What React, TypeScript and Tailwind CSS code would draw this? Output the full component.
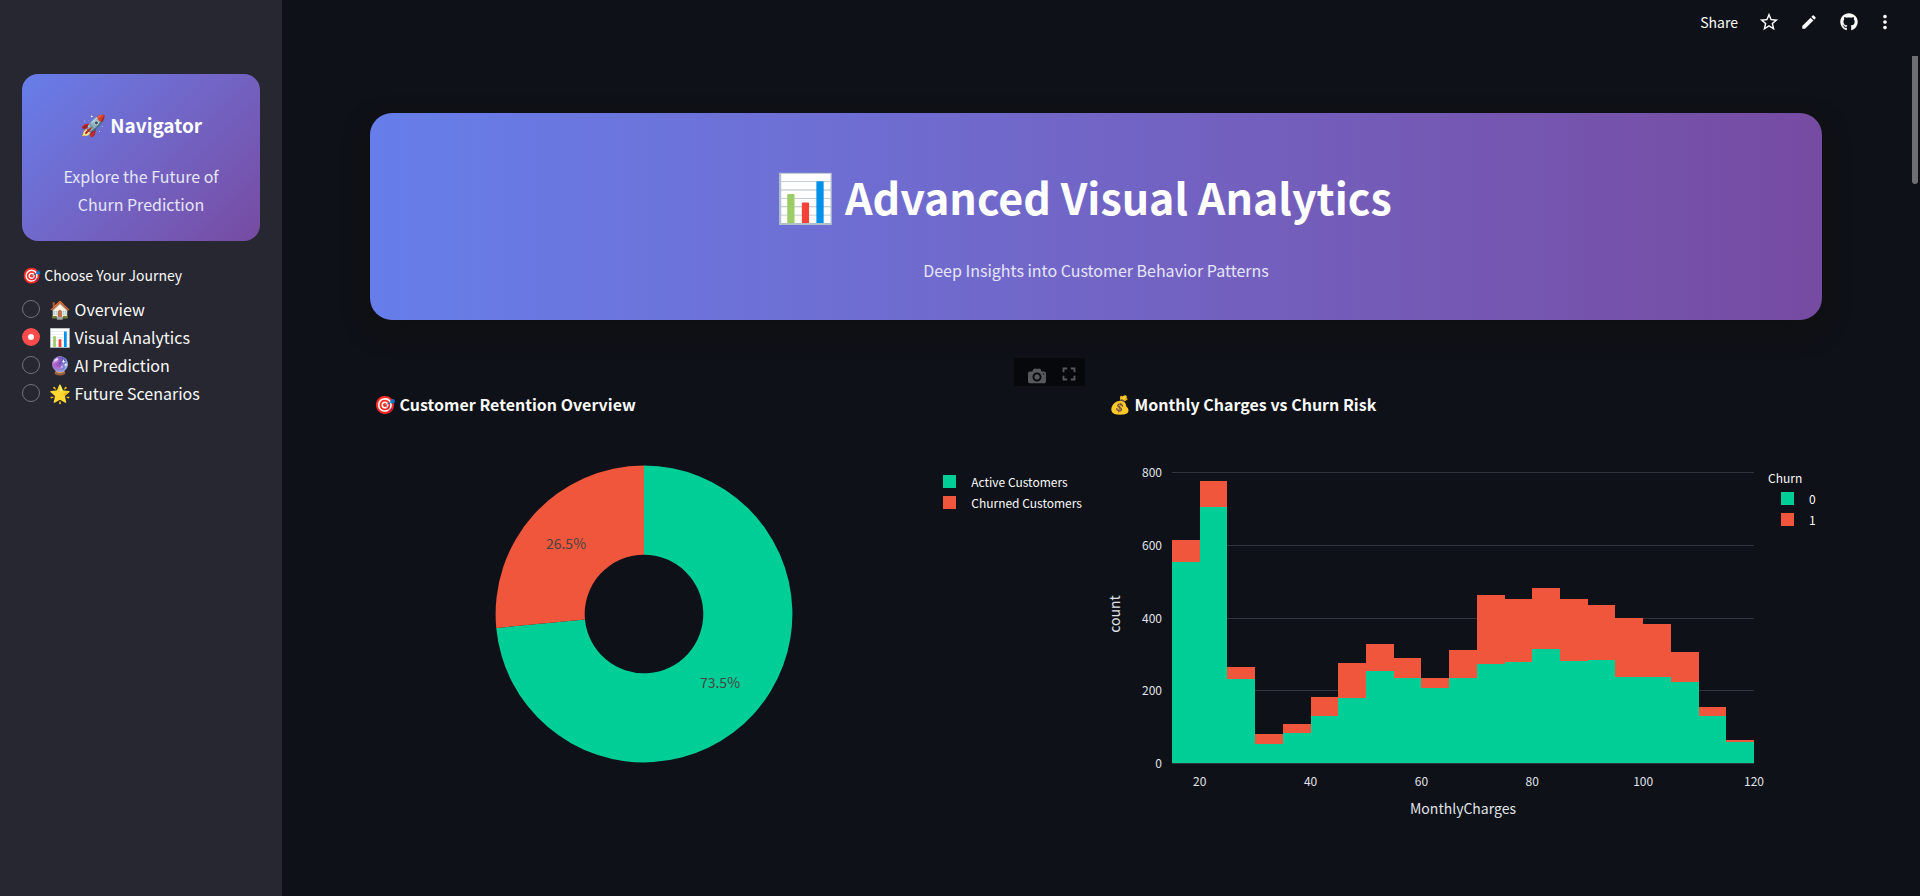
import type { ReactNode } from "react";
import { MdEdit, MdFullscreen, MdMoreVert, MdStarBorder } from "react-icons/md";
import { FaGithub } from "react-icons/fa";

const STAYED = "#00ce97";
const CHURNED = "#f0563b";

const pages = [
  { icon: "🏠", label: "Overview" },
  { icon: "📊", label: "Visual Analytics" },
  { icon: "🔮", label: "AI Prediction" },
  { icon: "🌟", label: "Future Scenarios" },
];

// [total customers, customers who stayed] for each 5-wide bin from 15 to 120
const bins: [number, number][] = [
  [613, 554], [775, 703], [264, 231], [80, 52], [107, 82], [181, 129], [275, 179],
  [327, 253], [289, 234], [234, 206], [311, 234], [462, 272], [451, 278], [481, 313],
  [451, 280], [434, 283], [398, 236], [382, 236], [305, 223], [154, 129], [63, 58],
];

function Emoji({ children }: { children: ReactNode }) {
  return <span className="font-['Noto_Color_Emoji',sans-serif] text-[1.1em] leading-none">{children}</span>;
}

function Sidebar() {
  return (
    <aside className="w-[282px] shrink-0 bg-[#262730] px-[22px] pt-[74px]">
      <div className="rounded-[16px] bg-linear-135 from-[#667eea] to-[#764ba2] px-4 pt-[35px] pb-[23px] text-center">
        <h2 className="text-[19px] leading-8 font-bold text-white">
          <Emoji>🚀</Emoji> Navigator
        </h2>
        <p className="mt-[21px] px-4 text-[16px] leading-7 text-[#e6e6fa]">Explore the Future of Churn Prediction</p>
      </div>
      <fieldset className="mt-[22px]">
        <legend className="text-[14px] leading-6">
          <Emoji>🎯</Emoji> Choose Your Journey
        </legend>
        <div className="mt-2">
          {pages.map((p) => (
            <label key={p.label} className="flex h-7 items-center gap-[9px] text-[16px] leading-6">
              <input
                type="radio"
                name="page"
                defaultChecked={p.label === "Visual Analytics"}
                className="size-[18px] appearance-none rounded-full border border-[#70717a] checked:border-[6px] checked:border-[#ff4b4b] checked:bg-[#fafafa]"
              />
              <span className="whitespace-nowrap">
                <Emoji>{p.icon}</Emoji> {p.label}
              </span>
            </label>
          ))}
        </div>
      </fieldset>
    </aside>
  );
}

function Toolbar() {
  return (
    <header className="flex h-14 items-center justify-end pr-6 pb-[12px]">
      <button type="button" className="text-[14px] leading-6">Share</button>
      <button type="button" aria-label="Favorite" className="ml-5"><MdStarBorder size={22} /></button>
      <button type="button" aria-label="Edit" className="ml-5"><MdEdit size={18} /></button>
      <button type="button" aria-label="View source" className="ml-[22px]"><FaGithub size={18} /></button>
      <button type="button" aria-label="More options" className="ml-4"><MdMoreVert size={22} /></button>
    </header>
  );
}

function Donut() {
  const share = 0.265;
  const angle = -share * 2 * Math.PI;
  const at = (r: number, a: number) => `${149 + r * Math.sin(a)} ${149 - r * Math.cos(a)}`;
  return (
    <svg viewBox="0 0 298 298" className="mt-[49px] ml-[125px] w-[298px] min-w-0" role="img" aria-label="Customer retention">
      <path d={`M${at(148.4, 0)}A148.4 148.4 0 1 1 ${at(148.4, angle)}L${at(59.3, angle)}A59.3 59.3 0 1 0 ${at(59.3, 0)}Z`} fill={STAYED} />
      <path d={`M${at(148.4, 0)}A148.4 148.4 0 0 0 ${at(148.4, angle)}L${at(59.3, angle)}A59.3 59.3 0 0 1 ${at(59.3, 0)}Z`} fill={CHURNED} />
      <g className="fill-[#444444] text-[14px]" textAnchor="middle">
        <text x="71" y="84">26.5%</text>
        <text x="225" y="223">73.5%</text>
      </g>
    </svg>
  );
}

function Histogram() {
  const left = 67;
  const base = 346;
  const step = 582 / bins.length;
  const y = (count: number) => Math.round(base - count * 0.3637);
  const x = (i: number) => Math.round(left + i * step);
  return (
    <svg viewBox="0 0 661 410" className="min-w-0 flex-1" role="img" aria-label="Monthly charges by churn">
      <g shapeRendering="crispEdges">
        {[0, 200, 400, 600, 800].map((v) => (
          <rect key={v} x={left} y={y(v)} width="582" height="1" fill="#31333f" />
        ))}
        {bins.map(([total, stayed], i) => (
          <g key={i}>
            <rect x={x(i)} y={y(total)} width={x(i + 1) - x(i)} height={y(stayed) - y(total)} fill={CHURNED} />
            <rect x={x(i)} y={y(stayed)} width={x(i + 1) - x(i)} height={base - y(stayed)} fill={STAYED} />
          </g>
        ))}
      </g>
      <g className="fill-[#e0e3ea] text-[12px]">
        {[0, 200, 400, 600, 800].map((v) => (
          <text key={v} x="57" y={y(v) + 5} textAnchor="end">{v}</text>
        ))}
        {[20, 40, 60, 80, 100, 120].map((v) => (
          <text key={v} x={left + ((v - 15) / 5) * step} y="369" textAnchor="middle">{v}</text>
        ))}
      </g>
      <g className="fill-[#e0e3ea] text-[14px]" textAnchor="middle">
        <text x="358" y="397">MonthlyCharges</text>
        <text transform="translate(15 197) rotate(-90)">count</text>
      </g>
    </svg>
  );
}

function LegendItem({ color, children }: { color: string; children: ReactNode }) {
  return (
    <li className="flex h-[21px] items-center gap-[15px]">
      <span className="size-[13px]" style={{ backgroundColor: color }} />
      {children}
    </li>
  );
}

function ChartTitle({ icon, children }: { icon: string; children: ReactNode }) {
  return (
    <h2 className="mt-[6px] pl-[4px] text-[16px] leading-6 font-bold">
      <Emoji>{icon}</Emoji> {children}
    </h2>
  );
}

export default function App() {
  return (
    <div className="relative flex min-h-screen bg-[#0e1117] font-['Noto_Sans_CJK_SC','Noto_Sans_CJK_JP',sans-serif] text-[#fafafa]">
      <Sidebar />
      <div className="min-w-0 flex-1">
        <Toolbar />
        <main className="pt-[57px] pr-[98px] pb-12 pl-[88px]">
          <div className="rounded-[22px] bg-linear-90 from-[#667eea] to-[#764ba2] pt-[47px] pb-[36px] text-center shadow-[0_10px_24px_rgba(16,16,16,0.9)]">
            <h1 className="pr-6 text-[43px] leading-[72px] font-bold text-white">
              <Emoji>📊</Emoji> Advanced Visual Analytics
            </h1>
            <p className="mt-6 text-[16px] leading-7 text-[#e6e6fa]">Deep Insights into Customer Behavior Patterns</p>
          </div>
          <div className="mt-[38px] grid grid-cols-2 gap-[18px]">
            <section>
              <div className="mr-[2px] ml-auto flex h-7 w-[71px] items-end justify-between bg-[#07080b] pr-[5px] pb-px pl-[14px] text-[#57585a]">
                <button type="button" aria-label="Download plot as a png">
                  <svg viewBox="0 0 1000 1000" className="size-[18px]" fill="currentColor">
                    <path transform="matrix(1 0 0 -1 0 850)" d="m500 450c-83 0-150-67-150-150 0-83 67-150 150-150 83 0 150 67 150 150 0 83-67 150-150 150z m400 150h-120c-16 0-34 13-39 29l-31 93c-6 15-23 28-40 28h-340c-16 0-34-13-39-28l-31-94c-6-15-23-28-40-28h-120c-55 0-100-45-100-100v-450c0-55 45-100 100-100h800c55 0 100 45 100 100v450c0 55-45 100-100 100z m-400-550c-138 0-250 112-250 250 0 138 112 250 250 250 138 0 250-112 250-250 0-138-112-250-250-250z m365 380c-19 0-35 16-35 35 0 19 16 35 35 35 19 0 35-16 35-35 0-19-16-35-35-35z" />
                  </svg>
                </button>
                <button type="button" aria-label="Fullscreen"><MdFullscreen size={22} /></button>
              </div>
              <ChartTitle icon="🎯">Customer Retention Overview</ChartTitle>
              <div className="flex items-start justify-between">
                <Donut />
                <ul className="mt-[55px] mr-[5px] shrink-0 text-[12px]">
                  <LegendItem color={STAYED}>Active Customers</LegendItem>
                  <LegendItem color={CHURNED}>Churned Customers</LegendItem>
                </ul>
              </div>
            </section>
            <section className="pt-7">
              <ChartTitle icon="💰">Monthly Charges vs Churn Risk</ChartTitle>
              <div className="flex items-start pt-px">
                <Histogram />
                <div className="mt-[50px] w-14 shrink-0 pl-[2px] text-[12px]">
                  <h3 className="leading-[21px]">Churn</h3>
                  <ul className="pl-[13px]">
                    <LegendItem color={STAYED}>0</LegendItem>
                    <LegendItem color={CHURNED}>1</LegendItem>
                  </ul>
                </div>
              </div>
            </section>
          </div>
        </main>
      </div>
      <div className="absolute top-14 right-[2px] h-32 w-[6px] rounded-b-[3px] bg-[#6e6f72]" />
    </div>
  );
}
